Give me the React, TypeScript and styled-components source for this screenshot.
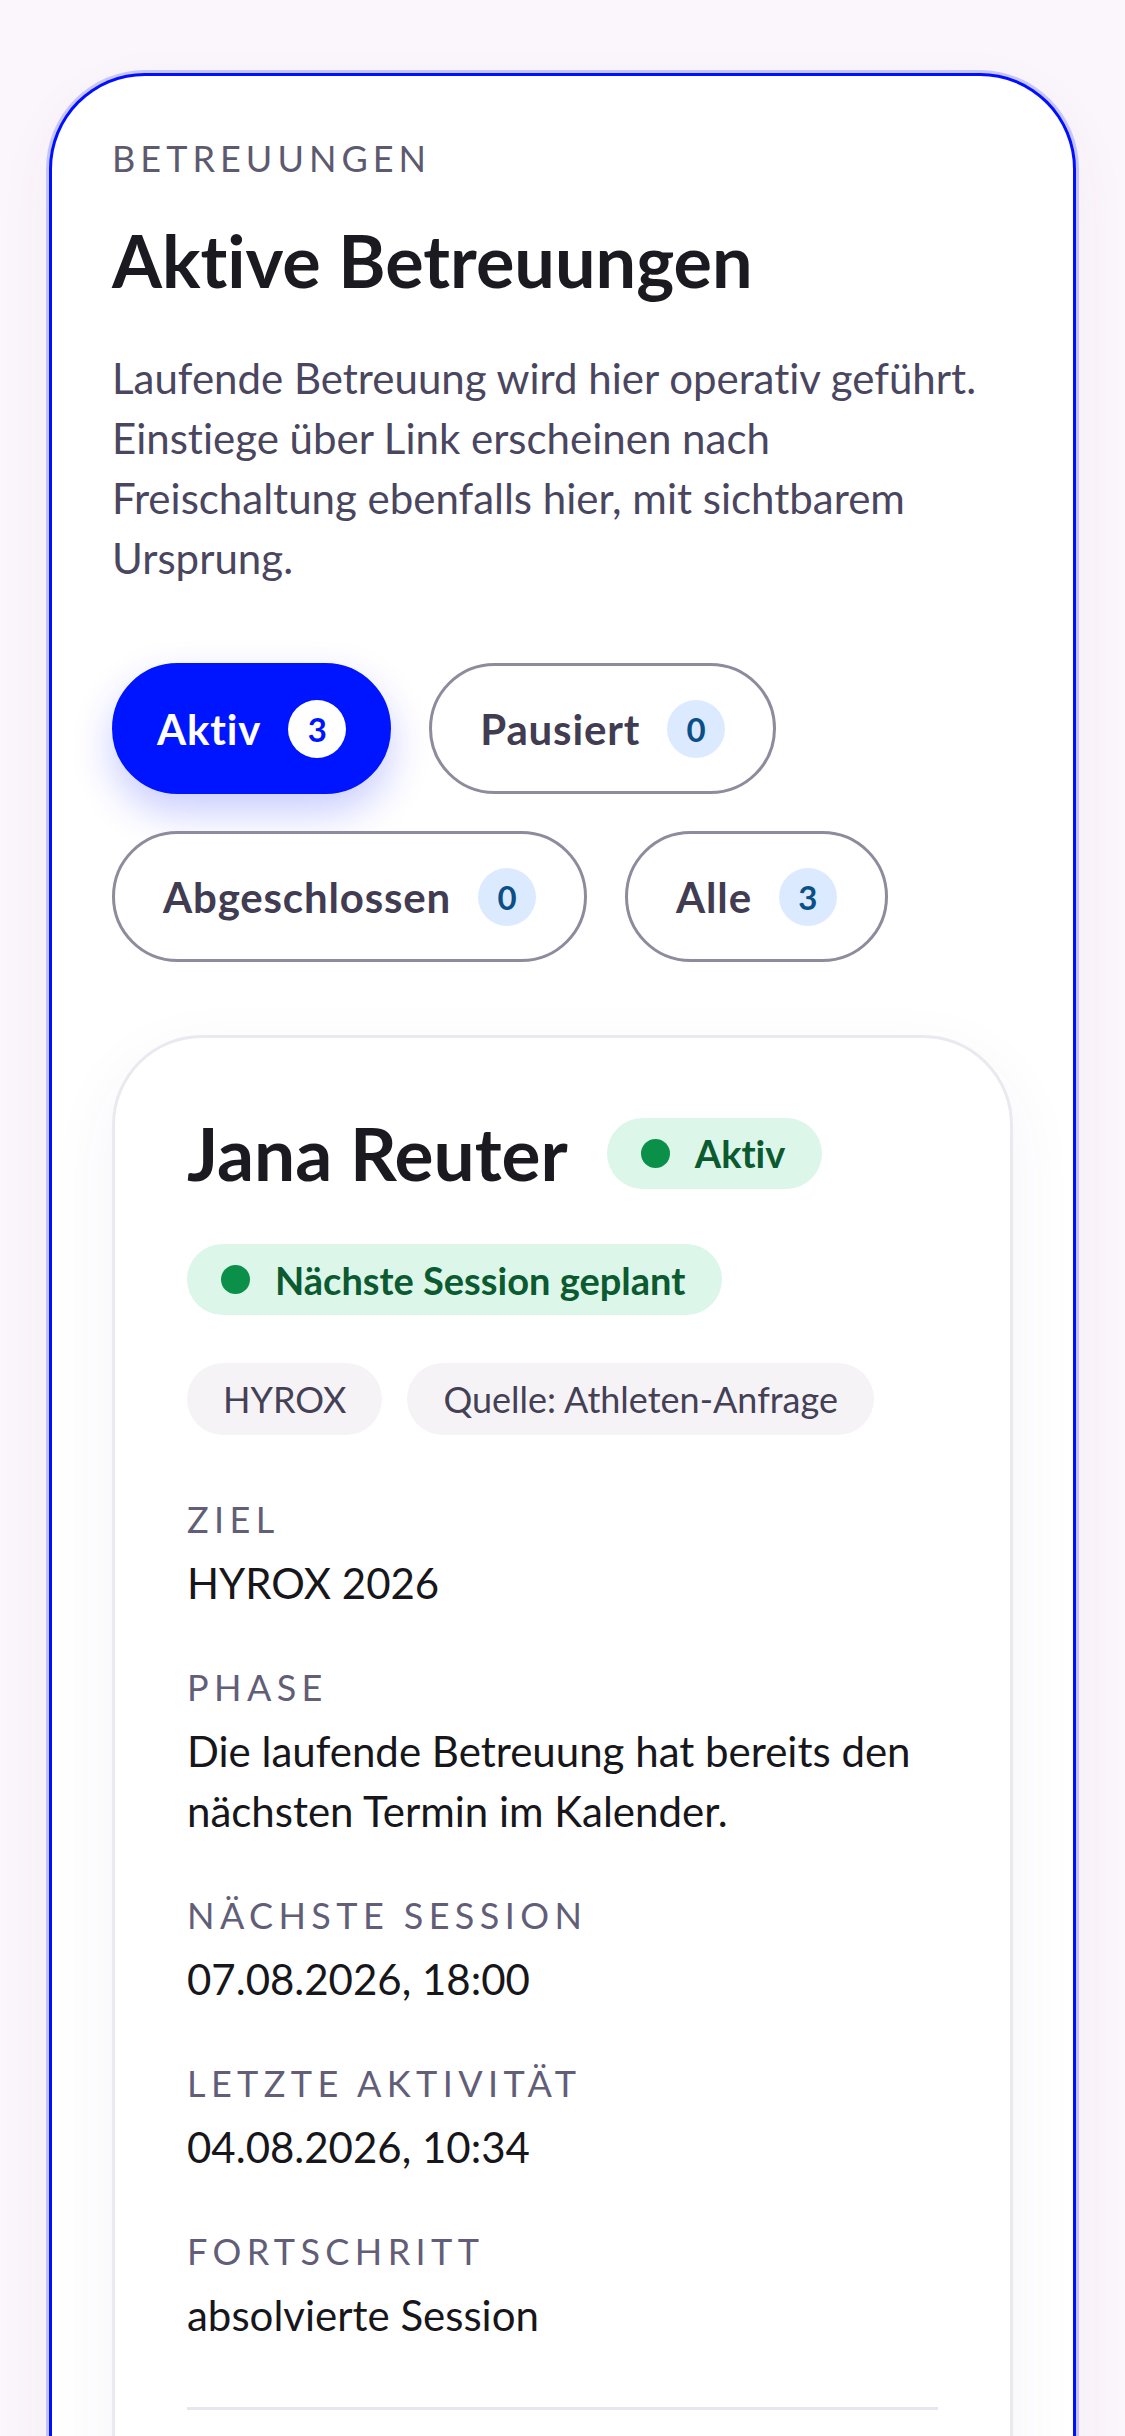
import React from "react";
import styled, { createGlobalStyle } from "styled-components";

const GlobalStyle = createGlobalStyle`
  * { box-sizing: border-box; }
  html, body {
    margin: 0;
    padding: 0;
    background: #fbf6fb;
    font-family: "Lato", "Noto Sans", sans-serif;
    font-variant-ligatures: none;
    -webkit-font-smoothing: antialiased;
  }
`;

type Filter = { label: string; count: number; active?: boolean };

const filters: Filter[] = [
  { label: "Aktiv", count: 3, active: true },
  { label: "Pausiert", count: 0 },
  { label: "Abgeschlossen", count: 0 },
  { label: "Alle", count: 3 },
];

const fields = [
  { label: "Ziel", value: "HYROX 2026" },
  {
    label: "Phase",
    value: "Die laufende Betreuung hat bereits den nächsten Termin im Kalender.",
  },
  { label: "Nächste Session", value: "07.08.2026, 18:00" },
  { label: "Letzte Aktivität", value: "04.08.2026, 10:34" },
  { label: "Fortschritt", value: "absolvierte Session" },
];

const App = () => {
  return (
    <>
      <GlobalStyle />
      <Page>
        <Panel>
          <Eyebrow>Betreuungen</Eyebrow>
          <Title>Aktive Betreuungen</Title>
          <Intro>
            Laufende Betreuung wird hier operativ geführt. Einstiege über Link
            erscheinen nach Freischaltung ebenfalls hier, mit sichtbarem
            Ursprung.
          </Intro>

          <FilterRow>
            {filters.map((f) => (
              <FilterPill key={f.label} $active={f.active}>
                {f.label}
                <Count $active={f.active}>{f.count}</Count>
              </FilterPill>
            ))}
          </FilterRow>

          <ClientCard>
            <NameRow>
              <Name>Jana Reuter</Name>
              <StatusBadge>
                <Dot />
                Aktiv
              </StatusBadge>
            </NameRow>

            <BadgeRow>
              <StatusBadge>
                <Dot />
                Nächste Session geplant
              </StatusBadge>
            </BadgeRow>

            <TagRow>
              <Tag>HYROX</Tag>
              <Tag>Quelle: Athleten-Anfrage</Tag>
            </TagRow>

            <FieldList>
              {fields.map((field) => (
                <Field key={field.label}>
                  <FieldLabel>{field.label}</FieldLabel>
                  <FieldValue>{field.value}</FieldValue>
                </Field>
              ))}
            </FieldList>

            <Divider />
          </ClientCard>
        </Panel>
      </Page>
    </>
  );
};

export default App;

const Page = styled.div`
  min-height: 2436px;
  padding: 73px 49px 0;
  background: #fbf6fb;
`;

const Panel = styled.section`
  background: #ffffff;
  border: 3px solid #0010ff;
  border-bottom: none;
  border-radius: 96px 96px 0 0;
  box-shadow: 0 0 0 3px rgba(0, 16, 255, 0.2), 0 20px 60px rgba(90, 60, 140, 0.05);
  padding: 58px 60px 300px;
  min-height: 2400px;
`;

const Eyebrow = styled.div`
  font-size: 36px;
  line-height: 48px;
  letter-spacing: 0.14em;
  text-transform: uppercase;
  color: #5d5a70;
`;

const Title = styled.h1`
  margin: 35px 0 0;
  font-size: 72px;
  line-height: 86px;
  font-weight: 700;
  color: #1b1a20;
`;

const Intro = styled.p`
  margin: 45px 0 0;
  font-size: 42px;
  line-height: 60px;
  color: #4a4660;
`;

const FilterRow = styled.div`
  display: flex;
  flex-wrap: wrap;
  gap: 37px 38px;
  margin-top: 75px;
`;

const FilterPill = styled.button<{ $active?: boolean }>`
  display: inline-flex;
  align-items: center;
  gap: 27px;
  height: 131px;
  padding: 0 ${(p) => (p.$active ? "42px" : "48px")};
  border-radius: 66px;
  border: 3px solid ${(p) => (p.$active ? "#0015ff" : "#8e8b9c")};
  background: ${(p) => (p.$active ? "#0015ff" : "#ffffff")};
  color: ${(p) => (p.$active ? "#ffffff" : "#413c51")};
  box-shadow: ${(p) =>
    p.$active ? "0 18px 40px rgba(0, 21, 255, 0.22)" : "none"};
  font-family: inherit;
  font-size: 42px;
  font-weight: 700;
  letter-spacing: 0.02em;
  cursor: pointer;
`;

const Count = styled.span<{ $active?: boolean }>`
  display: inline-flex;
  align-items: center;
  justify-content: center;
  width: 58px;
  height: 58px;
  border-radius: 50%;
  background: ${(p) => (p.$active ? "#ffffff" : "#dceaff")};
  color: ${(p) => (p.$active ? "#0015ff" : "#0a4f85")};
  font-size: 33px;
  font-weight: 700;
  letter-spacing: 0;
`;

const ClientCard = styled.article`
  margin-top: 73px;
  background: #ffffff;
  border: 3px solid #ebe9f0;
  border-radius: 90px;
  box-shadow: 0 24px 70px rgba(70, 50, 130, 0.06);
  padding: 72px 72px 240px;
`;

const NameRow = styled.div`
  display: flex;
  align-items: center;
  flex-wrap: wrap;
  gap: 39px;
`;

const Name = styled.h2`
  margin: 0;
  font-size: 73px;
  line-height: 86px;
  font-weight: 700;
  color: #1b1a20;
`;

const StatusBadge = styled.span`
  display: inline-flex;
  align-items: center;
  gap: 25px;
  height: 71px;
  padding: 0 37px 0 34px;
  border-radius: 36px;
  background: #dcf6e9;
  color: #0b5a30;
  font-size: 38px;
  font-weight: 700;
`;

const Dot = styled.span`
  width: 29px;
  height: 29px;
  border-radius: 50%;
  background: #0b9049;
`;

const BadgeRow = styled.div`
  display: flex;
  margin-top: 48px;
`;

const TagRow = styled.div`
  display: flex;
  flex-wrap: wrap;
  gap: 25px;
  margin-top: 48px;
`;

const Tag = styled.span`
  display: inline-flex;
  align-items: center;
  height: 72px;
  padding: 0 36px;
  border-radius: 36px;
  background: #f6f3f7;
  color: #444055;
  font-size: 36px;
`;

const FieldList = styled.div`
  display: flex;
  flex-direction: column;
  gap: 50px;
  margin-top: 60px;
`;

const Field = styled.div`
  display: flex;
  flex-direction: column;
  gap: 10px;
`;

const FieldLabel = styled.div`
  font-size: 36px;
  line-height: 48px;
  letter-spacing: 0.15em;
  text-transform: uppercase;
  color: #625e78;
`;

const FieldValue = styled.div`
  font-size: 42px;
  line-height: 60px;
  color: #17161b;
`;

const Divider = styled.hr`
  margin: 62px 0 0;
  border: none;
  height: 3px;
  background: #e8e6ec;
`;
